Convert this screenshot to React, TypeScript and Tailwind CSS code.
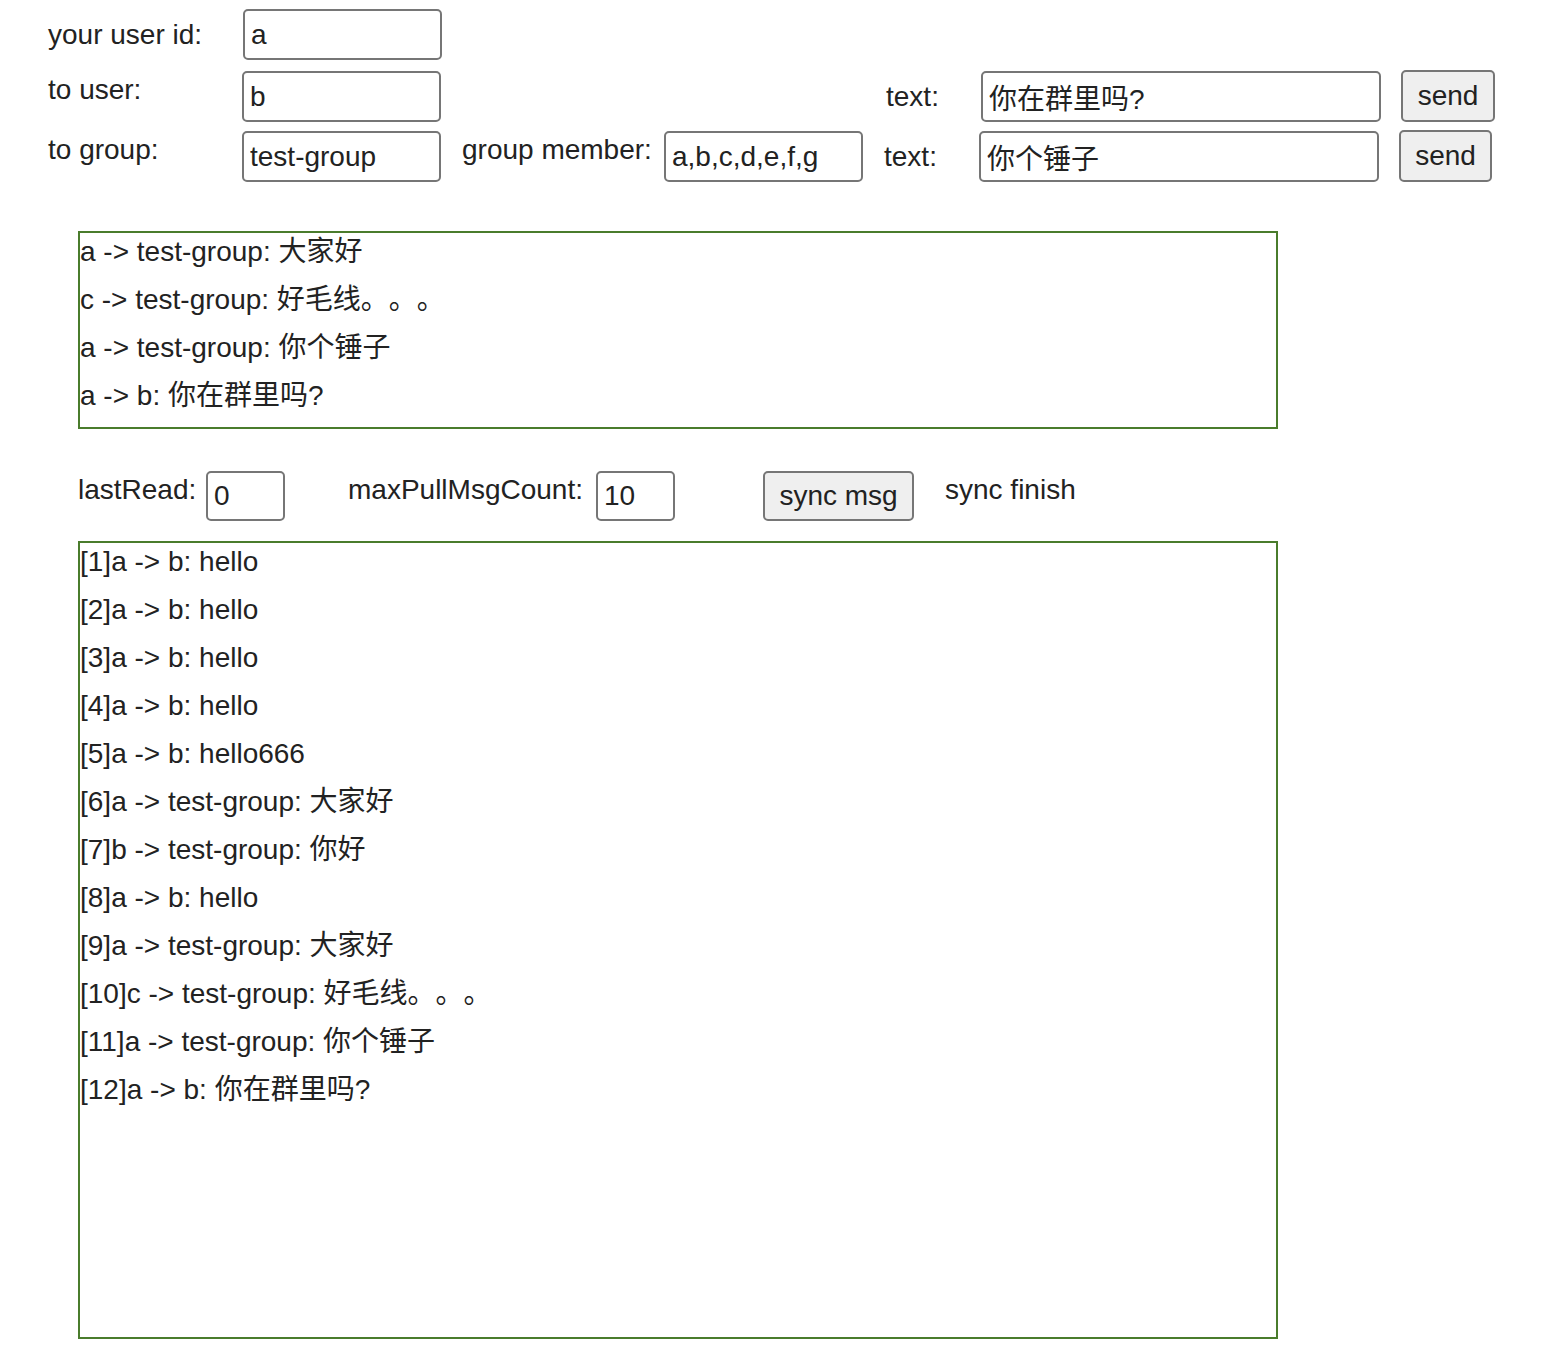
const font = '"Liberation Sans", Arial, "Noto Sans CJK SC", sans-serif';

const inputCls =
  "block border-2 border-[#767676] rounded-[5px] bg-white px-[6px] text-[28px] text-[#222] outline-none [text-spacing-trim:space-all]";
const btnCls =
  "block border-2 border-[#767676] rounded-[5px] bg-[#efefef] text-[28px] text-[#222] leading-none";

const recent = [
  "a -> test-group: 大家好",
  "c -> test-group: 好毛线。。。",
  "a -> test-group: 你个锤子",
  "a -> b: 你在群里吗?",
];

const history = [
  "[1]a -> b: hello",
  "[2]a -> b: hello",
  "[3]a -> b: hello",
  "[4]a -> b: hello",
  "[5]a -> b: hello666",
  "[6]a -> test-group: 大家好",
  "[7]b -> test-group: 你好",
  "[8]a -> b: hello",
  "[9]a -> test-group: 大家好",
  "[10]c -> test-group: 好毛线。。。",
  "[11]a -> test-group: 你个锤子",
  "[12]a -> b: 你在群里吗?",
];

function Label({ text, className = "" }: { text: string; className?: string }) {
  return <div className={`text-[28px] leading-[32px] text-[#222] whitespace-nowrap ${className}`}>{text}</div>;
}

function MsgLine({ text }: { text: string }) {
  return (
    <div className="text-[28px] leading-[38px] mb-[10px] text-[#222] whitespace-nowrap [text-spacing-trim:space-all]">
      {text}
    </div>
  );
}

export default function App() {
  return (
    <div className="w-[1546px] min-h-[1368px] bg-white pt-[9px]" style={{ fontFamily: font }}>
      {/* user / target inputs */}
      <div className="flex items-start pl-[48px]">
        <Label text="your user id:" className="w-[195px] pt-[10px]" />
        <input className={`${inputCls} w-[199px] h-[51px]`} defaultValue="a" />
      </div>

      <div className="flex items-start pl-[48px] mt-[11px]">
        <Label text="to user:" className="w-[194px] pt-[3px]" />
        <input className={`${inputCls} w-[199px] h-[51px]`} defaultValue="b" />
        <Label text="text:" className="ml-[445px] w-[95px] pt-[10px]" />
        <input className={`${inputCls} w-[400px] h-[51px]`} defaultValue="你在群里吗?" />
        <button className={`${btnCls} ml-[20px] w-[94px] h-[52px] -mt-[1px]`}>send</button>
      </div>

      <div className="flex items-start pl-[48px] mt-[9px]">
        <Label text="to group:" className="w-[194px] pt-[3px]" />
        <input className={`${inputCls} w-[199px] h-[51px]`} defaultValue="test-group" />
        <Label text="group member:" className="ml-[21px] w-[202px] pt-[3px]" />
        <input className={`${inputCls} w-[199px] h-[51px]`} defaultValue="a,b,c,d,e,f,g" />
        <Label text="text:" className="ml-[21px] w-[95px] pt-[10px]" />
        <input className={`${inputCls} w-[400px] h-[51px]`} defaultValue="你个锤子" />
        <button className={`${btnCls} ml-[20px] w-[93px] h-[52px] -mt-[1px]`}>send</button>
      </div>

      {/* latest messages */}
      <div className="ml-[78px] mt-[49px] w-[1200px] h-[198px] border-2 border-[#4a7c2c] overflow-hidden">
        {recent.map((m) => (
          <MsgLine key={m} text={m} />
        ))}
      </div>

      {/* sync controls */}
      <div className="flex items-start pl-[78px] mt-[42px]">
        <Label text="lastRead:" className="w-[128px] pt-[3px]" />
        <input className={`${inputCls} w-[79px] h-[50px]`} defaultValue="0" />
        <Label text="maxPullMsgCount:" className="ml-[63px] w-[248px] pt-[3px]" />
        <input className={`${inputCls} w-[79px] h-[50px]`} defaultValue="10" />
        <button className={`${btnCls} ml-[88px] w-[151px] h-[50px]`}>sync msg</button>
        <Label text="sync finish" className="ml-[31px] pt-[3px]" />
      </div>

      {/* history */}
      <div className="ml-[78px] mt-[20px] w-[1200px] h-[798px] border-2 border-[#4a7c2c] overflow-hidden">
        {history.map((m) => (
          <MsgLine key={m} text={m} />
        ))}
      </div>
    </div>
  );
}
